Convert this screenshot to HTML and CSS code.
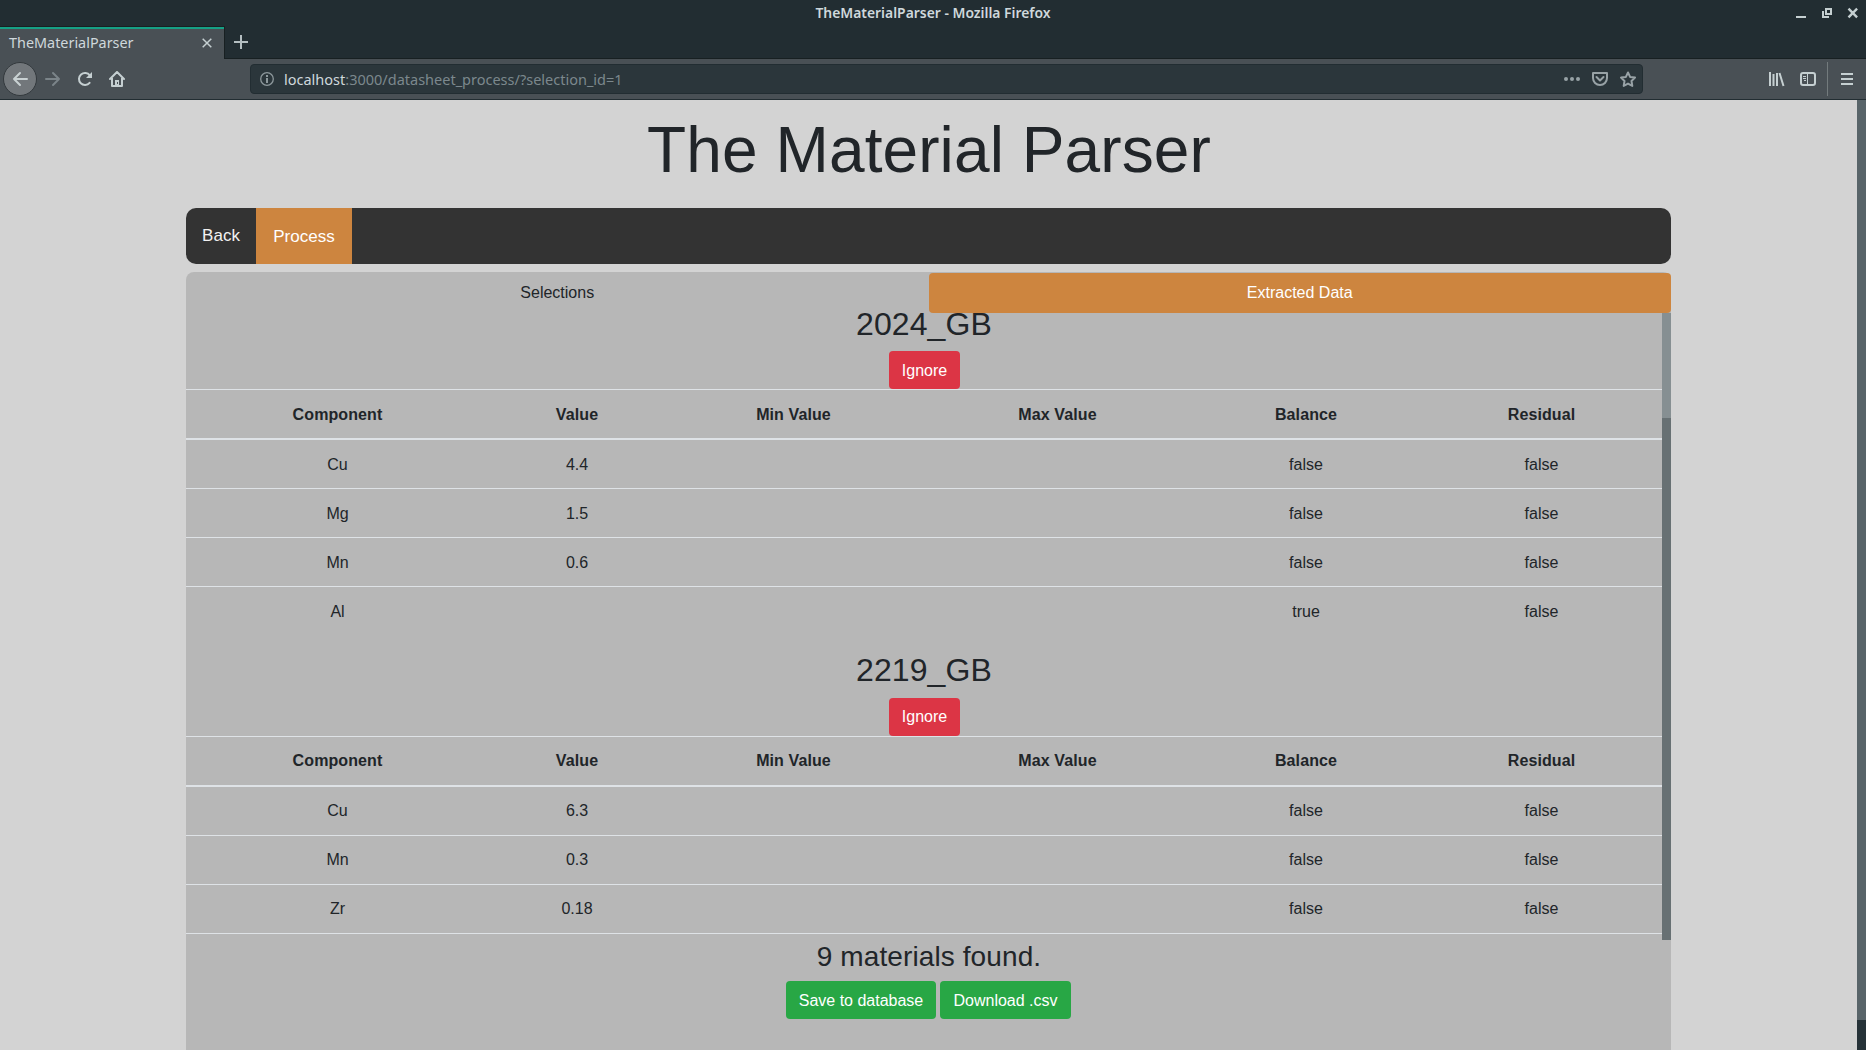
FILE: index.html
```html
<!DOCTYPE html>
<html lang="en">
<head>
<meta charset="utf-8">
<title>TheMaterialParser</title>
<link rel="stylesheet" href="styles.css">
</head>
<body>
<header class="browser">
  <div class="titlebar">
    <span class="window-title">TheMaterialParser - Mozilla Firefox</span>
    <svg class="window-buttons" width="66" height="16" viewBox="0 0 66 16"><path d="M0 13h10v2H0z" fill="#c5cfd1"/><path d="M30 6h5v5h-5z" fill="none" stroke="#c5cfd1" stroke-width="2"/><path d="M27 8v6h6" fill="none" stroke="#c5cfd1" stroke-width="2"/><path d="m52.500 5.700 8.600 8.600m0-8.600-8.600 8.600" stroke="#c5cfd1" stroke-width="2.400"/></svg>
  </div>
  <div class="tabstrip">
    <div class="tab"><span>TheMaterialParser</span>
      <svg width="10" height="10" viewBox="0 0 10 10"><path d="m.7.7 8.6 8.6m0-8.6L.7 9.3" stroke="#c5cfd1" stroke-width="1.5"/></svg>
    </div>
    <svg class="new-tab" width="14" height="14" viewBox="0 0 14 14"><path d="M7 0v14M0 7h14" stroke="#b4bec1" stroke-width="2"/></svg>
  </div>
  <div class="toolbar">
    <span class="back"><svg width="16" height="16" viewBox="0 0 16 16"><path d="M15 8H2m6-6L2 8l6 6" fill="none" stroke="#c9d1d3" stroke-width="2" stroke-linecap="round" stroke-linejoin="round"/></svg></span>
    <svg class="forward" width="16" height="16" viewBox="0 0 16 16"><path d="M1 8h13M8 2l6 6-6 6" fill="none" stroke="#7b8489" stroke-width="2" stroke-linecap="round" stroke-linejoin="round"/></svg>
    <svg class="reload" width="16" height="16" viewBox="0 0 16 16"><path d="M12.6 11.8A6 6 0 1 1 12.8 4.4" fill="none" stroke="#c5cfd1" stroke-width="2" stroke-linecap="round"/><path d="M15 1v6H9z" fill="#c5cfd1"/></svg>
    <svg class="home" width="16" height="16" viewBox="0 0 16 16"><path d="m1 8 7-7 7 7M3 7v8h10V7" fill="none" stroke="#c5cfd1" stroke-width="2" stroke-linecap="round" stroke-linejoin="round"/><path d="M6 15V9h4v6z" fill="#c5cfd1"/><path d="M8 11h1v2H8z" fill="#495055"/></svg>
    <div class="urlbar">
      <svg width="14" height="14" viewBox="0 0 14 14"><circle cx="7" cy="7" r="6.3" fill="none" stroke="#8d989c" stroke-width="1.3"/><path d="M6 3h2v2H6zM6 6h2v5H6z" fill="#8d989c"/></svg>
      <span class="url"><b>localhost</b>:3000/datasheet_process/?selection_id=1</span>
      <svg class="page-actions" width="72" height="16" viewBox="0 0 72 16"><g fill="#98a2a6"><circle cx="2" cy="8" r="2"/><circle cx="8" cy="8" r="2"/><circle cx="14" cy="8" r="2"/></g><g fill="none" stroke="#98a2a6" stroke-width="2" stroke-linejoin="round" stroke-linecap="round"><path d="M29 2h14v5a7 7 0 0 1-14 0z"/><path d="m32.5 6 3.5 3.5L39.500 6"/><path d="m64 1.500 2.100 4.400 4.900.7-3.500 3.400.8 4.900L64 12.600l-4.300 2.300.8-4.900L57 6.600l4.900-.7z"/></g></svg>
    </div>
    <svg class="tools" width="48" height="16" viewBox="0 0 48 16"><path d="M2 1v14M5.500 3v12M9 2v13M11.500 2l4 13" stroke="#c5cfd1" stroke-width="2" fill="none"/><rect x="33" y="2" width="14" height="12" rx="2" fill="none" stroke="#c5cfd1" stroke-width="2"/><path d="M39.500 2v12M35 5.500h3M35 7.500h3M36 9.500h2" stroke="#c5cfd1" stroke-width="1"/></svg>
    <svg class="menu" width="12" height="12" viewBox="0 0 12 12"><path d="M0 1h12M0 6h12M0 11h12" stroke="#c5cfd1" stroke-width="2"/></svg>
  </div>
</header>
<div class="viewport">
  <main class="page">
    <h1>The Material Parser</h1>
    <nav class="navbar"><a>Back</a><a class="active">Process</a></nav>
    <section class="panel">
      <div class="tabs"><a>Selections</a><a class="active">Extracted Data</a></div>
      <div class="results">
        <div class="materials">
          <article>
            <h2>2024_GB</h2>
            <button class="btn danger">Ignore</button>
            <table>
              <thead><tr><th class="c1">Component</th><th class="c2">Value</th><th class="c3">Min Value</th><th class="c4">Max Value</th><th class="c5">Balance</th><th class="c6">Residual</th></tr></thead>
              <tbody>
                <tr><td>Cu</td><td>4.4</td><td></td><td></td><td>false</td><td>false</td></tr>
                <tr><td>Mg</td><td>1.5</td><td></td><td></td><td>false</td><td>false</td></tr>
                <tr><td>Mn</td><td>0.6</td><td></td><td></td><td>false</td><td>false</td></tr>
                <tr><td>Al</td><td></td><td></td><td></td><td>true</td><td>false</td></tr>
              </tbody>
            </table>
          </article>
          <article>
            <h2>2219_GB</h2>
            <button class="btn danger">Ignore</button>
            <table>
              <thead><tr><th class="c1">Component</th><th class="c2">Value</th><th class="c3">Min Value</th><th class="c4">Max Value</th><th class="c5">Balance</th><th class="c6">Residual</th></tr></thead>
              <tbody>
                <tr><td>Cu</td><td>6.3</td><td></td><td></td><td>false</td><td>false</td></tr>
                <tr><td>Mn</td><td>0.3</td><td></td><td></td><td>false</td><td>false</td></tr>
                <tr class="last"><td>Zr</td><td>0.18</td><td></td><td></td><td>false</td><td>false</td></tr>
              </tbody>
            </table>
          </article>
        </div>
        <div class="inner-scroll"><div class="thumb"></div></div>
      </div>
      <footer>
        <h3>9 materials found.</h3>
        <div class="actions"><button class="btn success save">Save to database</button><button class="btn success download">Download .csv</button></div>
      </footer>
    </section>
  </main>
  <div class="page-scroll"><div class="thumb"></div></div>
</div>
</body>
</html>
```
FILE: styles.css
```css
* { box-sizing: border-box; }
body {
  margin: 0;
  height: 1050px;
  overflow: hidden;
  display: flex;
  flex-direction: column;
  font: 16px/24px "Liberation Sans", Arial, sans-serif;
  color: #212529;
  background: #d3d3d3;
}
svg { display: block; flex: none; }
h1, h2, h3 { margin: 0; font-weight: 400; }

/* Browser window */
.browser { height: 100px; flex: none; background: #222d32; font-family: "Noto Sans", sans-serif; color: #cfd8dc; }
.titlebar { height: 26px; display: grid; grid-template-columns: 1fr auto 1fr; align-items: start; }
.window-title { grid-column: 2; font-size: 13.9px; font-weight: 600; line-height: 25px; }
.window-buttons { justify-self: end; margin: 3px 4px 0 0; }
.tabstrip { height: 33px; display: flex; border-bottom: 1px solid #182022; }
.tab {
  width: 225px;
  height: 33px;
  flex: none;
  padding: 0 12px 0 9px;
  display: flex;
  justify-content: space-between;
  align-items: center;
  background: #495055;
  border-top: 1px solid #182022;
  border-right: 1px solid #182022;
  box-shadow: inset 0 2px #16a085;
  font-size: 14.4px;
}
.new-tab { margin: 9px 0 0 9px; }
.toolbar { height: 41px; display: flex; align-items: center; background: #495055; border-bottom: 1px solid #222d32; }
.back {
  width: 34px;
  height: 34px;
  margin: 0 8px 0 3px;
  display: grid;
  place-items: center;
  border: 1px solid #33393d;
  border-radius: 50%;
  background: #72777b;
}
.reload { margin-left: 16px; }
.home { margin-left: 16px; }
.urlbar {
  width: 1393px;
  height: 30px;
  margin-left: 125px;
  padding: 0 6px 0 9px;
  display: flex;
  align-items: center;
  background: #2b363b;
  border: 1px solid #222d32;
  border-radius: 4px;
  font-size: 14.5px;
}
.url { flex: 1; margin-left: 10px; color: #7c888d; }
.url b { font-weight: 400; color: #cfd8dc; }
.tools { margin-left: 125px; }
.menu { box-sizing: content-box; padding: 11px 0 11px 13px; margin-left: 11px; border-left: 1px solid #737b7d; }

/* Page */
.viewport { flex: 1; min-height: 0; display: flex; justify-content: space-between; }
.page { width: 1485px; margin-left: 186px; display: flex; flex-direction: column; }
h1 { height: 108px; padding-left: 1px; font-size: 64px; line-height: 100px; letter-spacing: .1px; text-align: center; }
.navbar { height: 56px; flex: none; display: flex; overflow: hidden; background: #333; border-radius: 10px; color: #f2f2f2; font-size: 17px; text-align: center; }
.navbar a { width: 70px; padding: 16px 0 0; }
.navbar .active { width: 96px; padding-top: 17px; background: #cd853f; color: #fff; }
.panel { flex: 1; min-height: 0; margin-top: 8px; padding-top: 1px; background: #b7b7b7; border-radius: 8px 8px 0 0; text-align: center; }
.tabs { height: 40px; display: flex; }
.tabs a { flex: 1; padding: 8px 16px; border-radius: 4px; }
.tabs .active { background: #cd853f; color: #fff; }
.results { height: 627px; display: flex; }
.materials { width: 1476px; overflow: hidden; }
.inner-scroll { width: 9px; background: #677073; }
.inner-scroll .thumb { height: 105px; background: #868f92; }
.page-scroll { width: 9px; background: #263238; }
.page-scroll .thumb { height: 920px; background: #586469; }
.materials h2 { font-size: 32px; line-height: 22px; letter-spacing: .1px; padding-bottom: 16px; }
.btn { display: block; height: 38px; margin: 0 auto; padding: 1px 0 0; border: 0; border-radius: 4px; color: #fff; font: inherit; }
.danger { width: 71px; padding-left: 1px; background: #dc3545; }
.success { background: #28a745; }
.save { width: 150px; }
.download { width: 131px; }
table { width: 100%; table-layout: fixed; border-spacing: 0; }
th, td { height: 49px; padding: 13px 12px 11px; border-top: 1px solid #dee2e6; line-height: 24px; }
thead th { height: 51px; border-bottom: 2px solid #dee2e6; letter-spacing: .1px; }
tbody tr:first-child td { height: 48px; border-top: 0; }
.last td { height: 50px; border-bottom: 1px solid #dee2e6; }
article + article { padding-top: 24px; }
.materials article + article h2 { padding-bottom: 17px; }
article + article .btn { padding-top: 0; }
article + article th, article + article td { padding: 12px; }
.materials tr > :last-child { padding-left: 13px; padding-right: 11px; }
.c1 { width: 303px; }
.c2 { width: 176px; }
.c3 { width: 257px; }
.c4 { width: 271px; }
.c5 { width: 226px; }
.c6 { width: 243px; }
footer h3 { padding-left: 1px; font-size: 28px; line-height: 34px; letter-spacing: .1px; }
.actions { display: flex; justify-content: center; gap: 4px; margin-top: 7px; }
.actions .btn { margin: 0; }
```
